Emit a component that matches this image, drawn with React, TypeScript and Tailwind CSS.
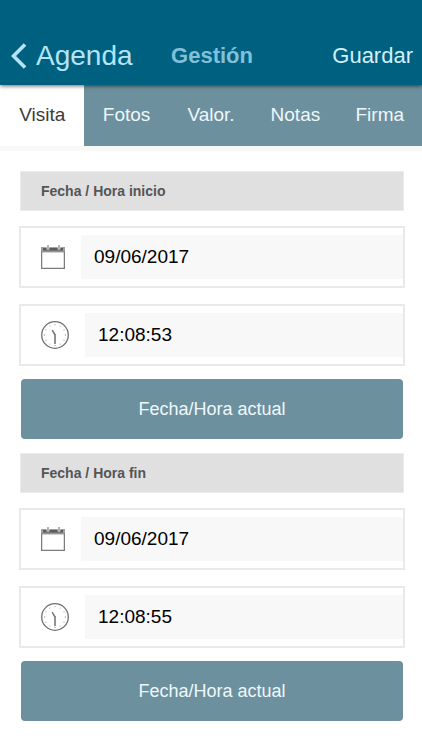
import { useState } from "react";
import clsx from "clsx";

const TABS = ["Visita", "Fotos", "Valor.", "Notas", "Firma"];

function CalendarIcon() {
  return (
    <svg width="24" height="24" viewBox="0 0 24 24" fill="none" aria-hidden="true">
      <path d="M0 2h24v5H0z" fill="#a0a0a0" />
      <path d="M2 3h20v2.6H2z" fill="#5c5c5c" />
      <path d="M.6 6v17.3h22.8V6" stroke="#7c7c7c" strokeWidth="1.3" />
      <path d="M0 6.9h24" stroke="#8c8c8c" />
      <path d="M7 1.5v3M18 1.5v3" stroke="#fff" strokeWidth="2.6" />
      <path d="M7 0v4M18 0v4" stroke="#808080" strokeWidth="1.2" />
    </svg>
  );
}

function ClockIcon() {
  return (
    <svg width="28" height="28" viewBox="0 0 28 28" fill="none" aria-hidden="true">
      <circle cx="14" cy="14" r="13.3" stroke="#6e6e6e" strokeWidth="1.3" />
      {/* hour marks */}
      <g fill="#a0a0a0">
        <circle cx="14" cy="3.6" r=".7" />
        <circle cx="19.2" cy="5" r=".6" />
        <circle cx="23" cy="8.8" r=".6" />
        <circle cx="24.4" cy="14" r=".7" />
        <circle cx="23" cy="19.2" r=".6" />
        <circle cx="19.2" cy="23" r=".6" />
        <circle cx="14" cy="24.4" r=".7" />
        <circle cx="8.8" cy="23" r=".6" />
        <circle cx="5" cy="19.2" r=".6" />
        <circle cx="3.6" cy="14" r=".7" />
        <circle cx="5" cy="8.8" r=".6" />
        <circle cx="8.8" cy="5" r=".6" />
      </g>
      <path d="M11.2 9.2l2.8 4.8" stroke="#777" strokeWidth="1.5" />
      <path d="M14 13v10" stroke="#777" strokeWidth="1.6" />
    </svg>
  );
}

function DateTimeSection({
  id,
  title,
  initialDate,
  initialTime,
}: {
  id: string;
  title: string;
  initialDate: string;
  initialTime: string;
}) {
  const [date, setDate] = useState(initialDate);
  const [time, setTime] = useState(initialTime);

  const setNow = () => {
    const now = new Date();
    setDate(now.toLocaleDateString("en-GB"));
    setTime(now.toLocaleTimeString("en-GB"));
  };

  return (
    <section>
      <h2 className="mr-px ml-px flex h-10 items-center border border-[#ececec] bg-[#e0e0e0] px-5 text-sm font-bold text-[#555]">
        {title}
      </h2>

      <div className="mt-[15px] flex h-[62px] items-center border-2 border-[#e9e9e9] pl-5">
        <label htmlFor={`${id}-date`} aria-label={`${title}: fecha`}>
          <CalendarIcon />
        </label>
        <input
          id={`${id}-date`}
          value={date}
          onChange={(e) => setDate(e.target.value)}
          className="ml-4 h-11 min-w-0 flex-1 bg-[#f8f8f8] px-[13px] text-[19px] text-black outline-none"
        />
      </div>

      <div className="mt-4 flex h-[62px] items-center border-2 border-[#e9e9e9] pl-5">
        <label htmlFor={`${id}-time`} aria-label={`${title}: hora`}>
          <ClockIcon />
        </label>
        <input
          id={`${id}-time`}
          value={time}
          onChange={(e) => setTime(e.target.value)}
          className="ml-4 h-11 min-w-0 flex-1 bg-[#f8f8f8] px-[13px] text-[19px] text-black outline-none"
        />
      </div>

      <div className="mt-[13px] px-0.5">
        <button
          onClick={setNow}
          className="h-[60px] w-full rounded bg-[#6d909e] text-lg text-[#eef8fc]"
        >
          Fecha/Hora actual
        </button>
      </div>
    </section>
  );
}

export default function App() {
  const [tab, setTab] = useState("Visita");

  return (
    <div className="min-h-screen bg-white font-['Liberation_Sans',Arial,sans-serif]">
      {/* top bar, leaves room for the status bar */}
      <header className="relative grid h-[85px] grid-cols-[1fr_auto_1fr] items-center bg-[#006080] pt-[27px] pr-[9px] pl-[11px] shadow-[0_1px_4px_rgba(0,0,0,0.6)]">
        <button className="flex items-center gap-[9px] text-[28px] leading-8 text-[#b5e4f7]">
          <svg width="16" height="26" viewBox="0 0 16 26" fill="none" aria-hidden="true">
            <path d="M14 1.5L2.5 13 14 24.5" stroke="currentColor" strokeWidth="3.6" />
          </svg>
          Agenda
        </button>
        <h1 className="text-[22px] leading-8 font-bold text-[#82c0da]">Gestión</h1>
        <button className="justify-self-end text-[22px] leading-8 text-[#d3effa]">
          Guardar
        </button>
      </header>

      <nav className="grid h-[61px] grid-cols-5 bg-[#6d909e]">
        {TABS.map((t) => (
          <button
            key={t}
            onClick={() => setTab(t)}
            className={clsx(
              "pb-0.5 text-[19px] leading-6",
              t === tab ? "bg-white text-[#3c3c3c]" : "text-[#edf7fb]",
            )}
          >
            {t}
          </button>
        ))}
      </nav>

      <main className="flex flex-col gap-3.5 border-t-[5px] border-[#f8f8f8] pt-5 pr-[17px] pb-7 pl-[19px]">
        <DateTimeSection
          id="start"
          title="Fecha / Hora inicio"
          initialDate="09/06/2017"
          initialTime="12:08:53"
        />
        <DateTimeSection
          id="end"
          title="Fecha / Hora fin"
          initialDate="09/06/2017"
          initialTime="12:08:55"
        />
      </main>
    </div>
  );
}
